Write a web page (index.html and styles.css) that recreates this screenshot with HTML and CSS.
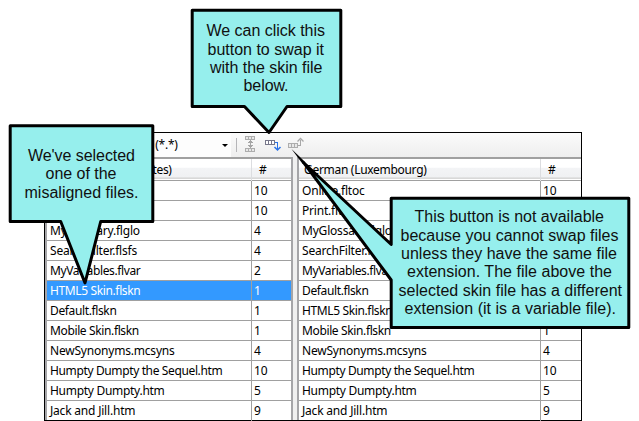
FILE: index.html
```html
<!DOCTYPE html>
<html lang="en">
<head>
<meta charset="utf-8">
<title>File alignment</title>
<link rel="stylesheet" href="styles.css">
</head>
<body>
<main class="window">
  <div class="toolbar">
    <div class="filter"><span>All Files</span><span class="pattern">(*.*)</span><i class="caret"></i></div>
    <svg class="tools" width="80" height="24" viewBox="231 133 80 24" shape-rendering="crispEdges">
      <path d="M236.500 138v14" stroke="#b5b5b8"/>
      <g fill="#e8e8e8" stroke="#adadad">
        <path d="M245.500 136.500h9v3h-9zM248.500 137v3M251.500 137v3M245.500 148.500h9v3h-9zM248.500 149v3M251.500 149v3"/>
        <path d="M288.500 143.500h9v4h-9zM291.500 144v4M294.500 144v4"/>
      </g>
      <path d="M250.500 140v8M249 141.500h3M248 142.500h5M248 145.500h5M249 146.500h3" fill="none" stroke="#a5a5a5"/>
      <path d="M265.500 140.500h9v4h-9zM268.500 141v4M271.500 141v4" fill="#fff" stroke="#77778a"/>
      <path d="M275 142.500h2.500v7" fill="none" stroke="#2b73e8"/>
      <path d="M274.500 147l3 3 3-3" fill="none" stroke="#2b73e8" stroke-width="1.500" shape-rendering="auto"/>
      <path d="M298 145.500h2.500v-6" fill="none" stroke="#a8a8a8"/>
      <path d="M297.500 141.500l3-3 3 3" fill="none" stroke="#a8a8a8" stroke-width="1.300" shape-rendering="auto"/>
    </svg>
  </div>
  <div class="grids">
    <section class="grid left">
      <div class="row head"><b>English (United States)</b><b>#</b></div>
      <div class="row"><span>Online.fltoc</span><span>10</span></div>
      <div class="row"><span>Print.fltoc</span><span>10</span></div>
      <div class="row"><span>MyGlossary.flglo</span><span>4</span></div>
      <div class="row"><span>SearchFilter.flsfs</span><span>4</span></div>
      <div class="row tight"><span>MyVariables.flvar</span><span>2</span></div>
      <div class="row tight selected"><span>HTML5 Skin.flskn</span><span>1</span></div>
      <div class="row tight"><span>Default.flskn</span><span>1</span></div>
      <div class="row tight"><span>Mobile Skin.flskn</span><span>1</span></div>
      <div class="row"><span>NewSynonyms.mcsyns</span><span>4</span></div>
      <div class="row tight"><span>Humpty Dumpty the Sequel.htm</span><span>10</span></div>
      <div class="row semi"><span>Humpty Dumpty.htm</span><span>5</span></div>
      <div class="row"><span>Jack and Jill.htm</span><span>9</span></div>
    </section>
    <section class="grid right">
      <div class="row head"><b>German (Luxembourg)</b><b>#</b></div>
      <div class="row"><span>Online.fltoc</span><span>10</span></div>
      <div class="row"><span>Print.fltoc</span><span>10</span></div>
      <div class="row"><span>MyGlossary.flglo</span><span>4</span></div>
      <div class="row"><span>SearchFilter.flsfs</span><span>4</span></div>
      <div class="row tight"><span>MyVariables.flvar</span><span>2</span></div>
      <div class="row tight"><span>Default.flskn</span><span>1</span></div>
      <div class="row tight"><span>HTML5 Skin.flskn</span><span>1</span></div>
      <div class="row tight"><span>Mobile Skin.flskn</span><span>1</span></div>
      <div class="row"><span>NewSynonyms.mcsyns</span><span>4</span></div>
      <div class="row tight"><span>Humpty Dumpty the Sequel.htm</span><span>10</span></div>
      <div class="row semi"><span>Humpty Dumpty.htm</span><span>5</span></div>
      <div class="row"><span>Jack and Jill.htm</span><span>9</span></div>
    </section>
  </div>
</main>
<svg class="callouts" width="639" height="421" viewBox="0 0 639 421">
  <g class="bubble">
    <path d="M192.200 10.200H340.800V106.500H287L269 132.500L244.500 106.500H192.200Z"/>
    <path d="M10.200 125.800H152.800V221.500H100.700L85 283L60.700 221.500H10.200Z"/>
    <path d="M391.200 198.200H628.800V327.500H391.200V280L304 163L391.200 244.500Z"/>
  </g>
  <path d="M291.500 149L305.200 162L302.700 164Z"/>
  <g class="words">
    <text x="206.500" y="36" textLength="118.500">We can click this</text>
    <text x="207.500" y="55" textLength="116.500">button to swap it</text>
    <text x="210" y="73" textLength="112.500">with the skin file</text>
    <text x="243.500" y="91" textLength="45">below.</text>
    <text x="28" y="161" textLength="107">We've selected</text>
    <text x="45.500" y="179" textLength="71">one of the</text>
    <text x="24.500" y="198" textLength="114">misaligned files.</text>
    <text x="414.500" y="222" textLength="189.500">This button is not available</text>
    <text x="400.500" y="241" textLength="218">because you cannot swap files</text>
    <text x="401" y="259" textLength="216">unless they have the same file</text>
    <text x="407" y="277" textLength="205">extension. The file above the</text>
    <text x="398.500" y="296" textLength="223.500">selected skin file has a different</text>
    <text x="404.500" y="314" textLength="211.500">extension (it is a variable file).</text>
  </g>
</svg>
</body>
</html>
```
FILE: styles.css
```css
body {
  display: flow-root;
  margin: 0;
  width: 639px;
  height: 421px;
  overflow: hidden;
  position: relative;
  background: #fff;
  color: #000;
  font: 12px/19px "Noto Sans", sans-serif;
}
.window {
  box-sizing: border-box;
  width: 538px;
  height: 289px;
  margin: 132px 0 0 44px;
  border: 1px solid #000;
  background: #f0f0f0;
}
.toolbar {
  height: 24px;
  display: flex;
  background: linear-gradient(#fbfbfb, #eee);
}
.filter {
  box-sizing: border-box;
  width: 186px;
  padding: 0 3px 0 60px;
  display: flex;
  align-items: center;
  background: #fdfdfd;
  white-space: nowrap;
  line-height: 22px;
  letter-spacing: -.2px;
}
.filter .pattern { margin-left: 10px; }
.caret {
  margin-left: auto;
  border: solid transparent;
  border-width: 3px 3px 0;
  border-top-color: #000;
}
.tools { flex: none; }
.grids { display: flex; gap: 4px; height: 263px; }
.grid {
  box-sizing: border-box;
  border-top: 2px solid #a0a0a0;
  border-left: 2px solid #a5a5a8;
  background: #fff;
}
.left { width: 248px; border-right: 2px solid #a5a5a8; }
.right { width: 284px; }
.row {
  box-sizing: border-box;
  height: 20px;
  display: grid;
  grid-template-columns: 204px 1fr;
  border-bottom: 1px solid #a0a0a0;
}
.right .row { grid-template-columns: 241px 1fr; }
.row:last-child { border-bottom: 0; }
.row > * { padding-left: 3px; white-space: nowrap; letter-spacing: -.2px; }
.row.semi > :first-child { letter-spacing: -.29px; }
.row.tight > :first-child { letter-spacing: -.37px; }
.row > :last-child { border-left: 1px solid #a0a0a0; padding-left: 2px; }
.row.head {
  height: 22px;
  line-height: 22px;
  background: linear-gradient(#fff 0 40%, #f3f4f6 42%, #f0f1f3 85%, #d8d8d8 90% 95%, #fff 95%);
}
.row.head b { font-weight: normal; padding-left: 5px; letter-spacing: -.3px; }
.row.head b:last-child { border-left-color: #dcdde0; padding-left: 7px; }
.row.selected { background: #3399ff; color: #fff; }
.callouts { position: absolute; left: 0; top: 0; }
.bubble {
  fill: #96efed;
  stroke: #000;
  stroke-width: 3px;
  stroke-linejoin: round;
}
.words { font: 16px "Liberation Sans", sans-serif; fill: #101010; }
```
